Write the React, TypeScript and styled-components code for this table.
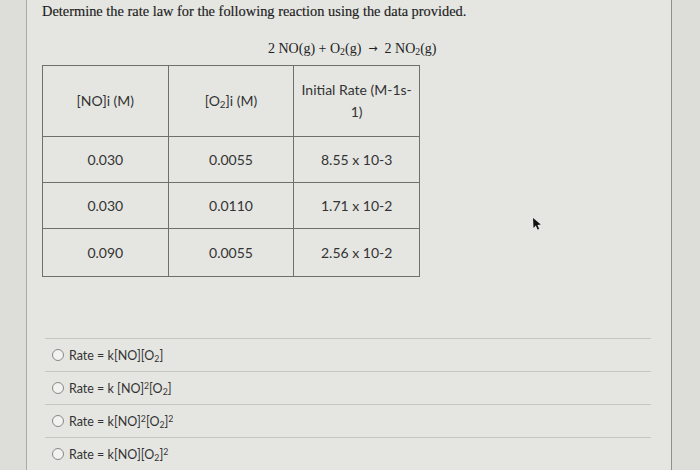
import styled, { createGlobalStyle } from 'styled-components';

const GlobalStyle = createGlobalStyle`
  html, body {
    margin: 0;
    padding: 0;
    background: #dddeda;
  }
`;

const rows = [
  ['0.030', '0.0055', '8.55 x 10-3'],
  ['0.030', '0.0110', '1.71 x 10-2'],
  ['0.090', '0.0055', '2.56 x 10-2'],
];

const Sub = styled.sub`
  font-size: 0.7em;
  line-height: 0;
  vertical-align: -0.25em;
`;

const Sup = styled.sup`
  font-size: 0.7em;
  line-height: 0;
  vertical-align: 0.45em;
`;

const options = [
  <>Rate = k[NO][O<Sub>2</Sub>]</>,
  <>Rate = k [NO]<Sup>2</Sup>[O<Sub>2</Sub>]</>,
  <>Rate = k[NO]<Sup>2</Sup>[O<Sub>2</Sub>]<Sup>2</Sup></>,
  <>Rate = k[NO][O<Sub>2</Sub>]<Sup>2</Sup></>,
];

export default function App() {
  return (
    <>
      <GlobalStyle />
      <Page>
        <Panel>
          <Title>Determine the rate law for the following reaction using the data provided.</Title>
          <Equation>
            2 NO(g) + O<Sub>2</Sub>(g)<Arrow>→</Arrow>2 NO<Sub>2</Sub>(g)
          </Equation>
          <DataTable>
            <tbody>
              <Row $height={71}>
                <Cell>[NO]i (M)</Cell>
                <Cell>[O<Sub>2</Sub>]i (M)</Cell>
                <Cell>
                  Initial Rate (M-1s-
                  <br />
                  1)
                </Cell>
              </Row>
              {rows.map((r, i) => (
                <Row key={i} $height={i === 2 ? 48 : 46}>
                  {r.map((v, j) => (
                    <Cell key={j}>{v}</Cell>
                  ))}
                </Row>
              ))}
            </tbody>
          </DataTable>
          <Options>
            {options.map((o, i) => (
              <Option key={i}>
                <Radio />
                <span>{o}</span>
              </Option>
            ))}
          </Options>
        </Panel>
        <Cursor width="10" height="14" viewBox="0 0 10 14">
          <path d="M1 1 L1.5 11 L3.8 8.6 L5.6 12.6 L7.2 11.9 L5.4 8 L8.8 7.6 Z" fill="#111" />
        </Cursor>
      </Page>
    </>
  );
}

const Page = styled.div`
  position: relative;
  width: 700px;
  height: 470px;
  overflow: hidden;
  padding-left: 26px;
  box-sizing: border-box;
  display: flex;
`;

const Panel = styled.div`
  width: 646px;
  flex-shrink: 0;
  box-sizing: border-box;
  border-left: 1px solid #a9aaa6;
  border-right: 1px solid #8f908c;
  background: #e5e6e2;
  padding: 2px 0 0 15px;
  display: flex;
  flex-direction: column;
`;

const Title = styled.div`
  font-family: 'Liberation Serif', 'Times New Roman', serif;
  font-size: 14.4px;
  color: #1c1c1c;
  line-height: 18px;
  -webkit-text-stroke: 0.15px #1c1c1c;
`;

const Equation = styled.div`
  margin: 20px 0 0 226px;
  font-family: 'Liberation Serif', 'Times New Roman', serif;
  font-size: 14px;
  color: #222;
  line-height: 18px;
`;

const Arrow = styled.span`
  font-family: 'DejaVu Sans', sans-serif;
  font-size: 11px;
  margin: 0 7px;
  vertical-align: 1px;
`;

const DataTable = styled.table`
  margin-top: 7px;
  width: 378px;
  border-collapse: collapse;
  border: 1px solid #6f706c;
  table-layout: fixed;
  font-family: Lato, 'Open Sans', sans-serif;
  font-size: 14px;
  color: #333;
`;

const Row = styled.tr<{ $height: number }>`
  height: ${(p) => p.$height}px;
`;

const Cell = styled.td`
  border: 1px solid #6f706c;
  text-align: center;
  vertical-align: middle;
  padding: 0 2px;
  line-height: 22px;
  white-space: nowrap;
`;

const Options = styled.div`
  margin-top: 61px;
  width: 606px;
  display: flex;
  flex-direction: column;
  margin-left: 3px;
`;

const Option = styled.div`
  height: 33px;
  box-sizing: border-box;
  border-top: 1px solid #c6c7c3;
  display: flex;
  align-items: center;
  gap: 5px;
  padding-left: 7px;
  font-family: Lato, 'Open Sans', sans-serif;
  font-size: 12.5px;
  color: #333;
`;

const Radio = styled.span`
  width: 10px;
  height: 10px;
  border-radius: 50%;
  border: 1px solid #888;
  background: #f2f2f0;
  flex-shrink: 0;
`;

const Cursor = styled.svg`
  position: absolute;
  left: 532px;
  top: 217px;
`;
